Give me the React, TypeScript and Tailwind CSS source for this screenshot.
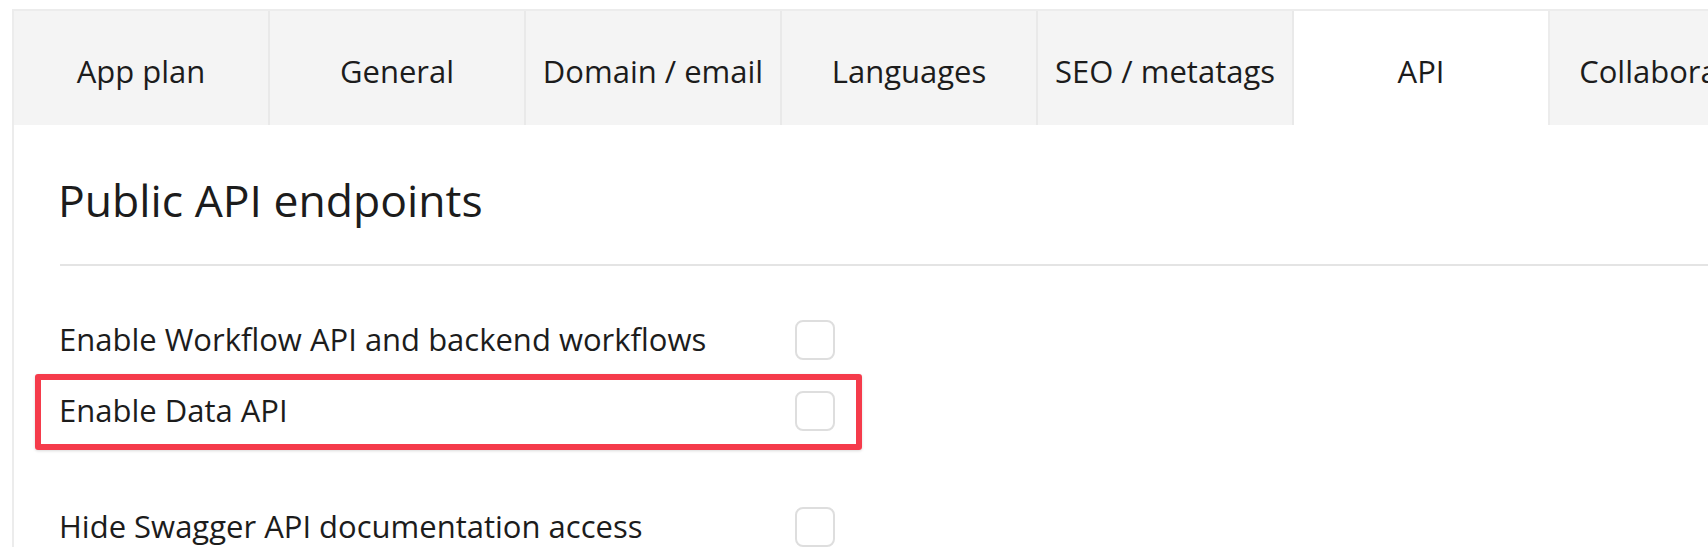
import React from "react";

const tabs = ["App plan", "General", "Domain / email", "Languages", "SEO / metatags", "API", "Collaborators"];

function Checkbox() {
  return <div className="w-[40px] h-[40px] shrink-0 rounded-[8px] border-2 border-[#dedede] bg-white" />;
}

export default function App() {
  return (
    <div className="w-full h-[559px] overflow-hidden bg-white text-[#1c1c1c]" style={{ fontFamily: '"Open Sans", sans-serif' }}>
      <div className="ml-[12px] mt-[9px] w-[2100px] border-l-2 border-t-2 border-[#ececec]">
        <div className="flex h-[114px]">
          {tabs.map((t) => (
            <div
              key={t}
              className={
                t === "API"
                  ? "w-[256px] shrink-0 flex items-center justify-center pt-[7px] bg-white border-r-2 border-[#ececec] text-[31px] leading-[31px]"
                  : "w-[256px] shrink-0 flex items-center justify-center pt-[7px] bg-[#f4f4f4] border-r-2 border-[#e9e9e9] text-[31px] leading-[31px]"
              }
            >
              <span className="whitespace-nowrap">{t}</span>
            </div>
          ))}
        </div>
        <div className="pl-[44px] pt-[53px]">
          <h1 className="text-[44.5px] leading-[44.5px] font-normal">Public API endpoints</h1>
          <div className="mt-[41px] ml-[2px] h-[2px] bg-[#e4e4e4]" />
          <div className="mt-[54px] ml-[1px] flex flex-col">
            <div className="flex items-center h-[40px]">
              <div className="w-[736px] text-[31px] leading-[31px] whitespace-nowrap">Enable Workflow API and backend workflows</div>
              <Checkbox />
            </div>
            <div className="relative mt-[31px] flex items-center h-[40px] w-[776px]">
              <div className="absolute left-[-24px] right-[-27px] top-[-17px] bottom-[-19px] border-[6px] border-[#f53b4b] rounded-[3px] shadow-[0_1px_3px_rgba(0,0,0,0.15)]" />
              <div className="w-[736px] text-[31px] leading-[31px] whitespace-nowrap">Enable Data API</div>
              <Checkbox />
            </div>
            <div className="mt-[76px] flex items-center h-[40px]">
              <div className="w-[736px] text-[31px] leading-[31px] whitespace-nowrap">Hide Swagger API documentation access</div>
              <Checkbox />
            </div>
          </div>
        </div>
      </div>
    </div>
  );
}
